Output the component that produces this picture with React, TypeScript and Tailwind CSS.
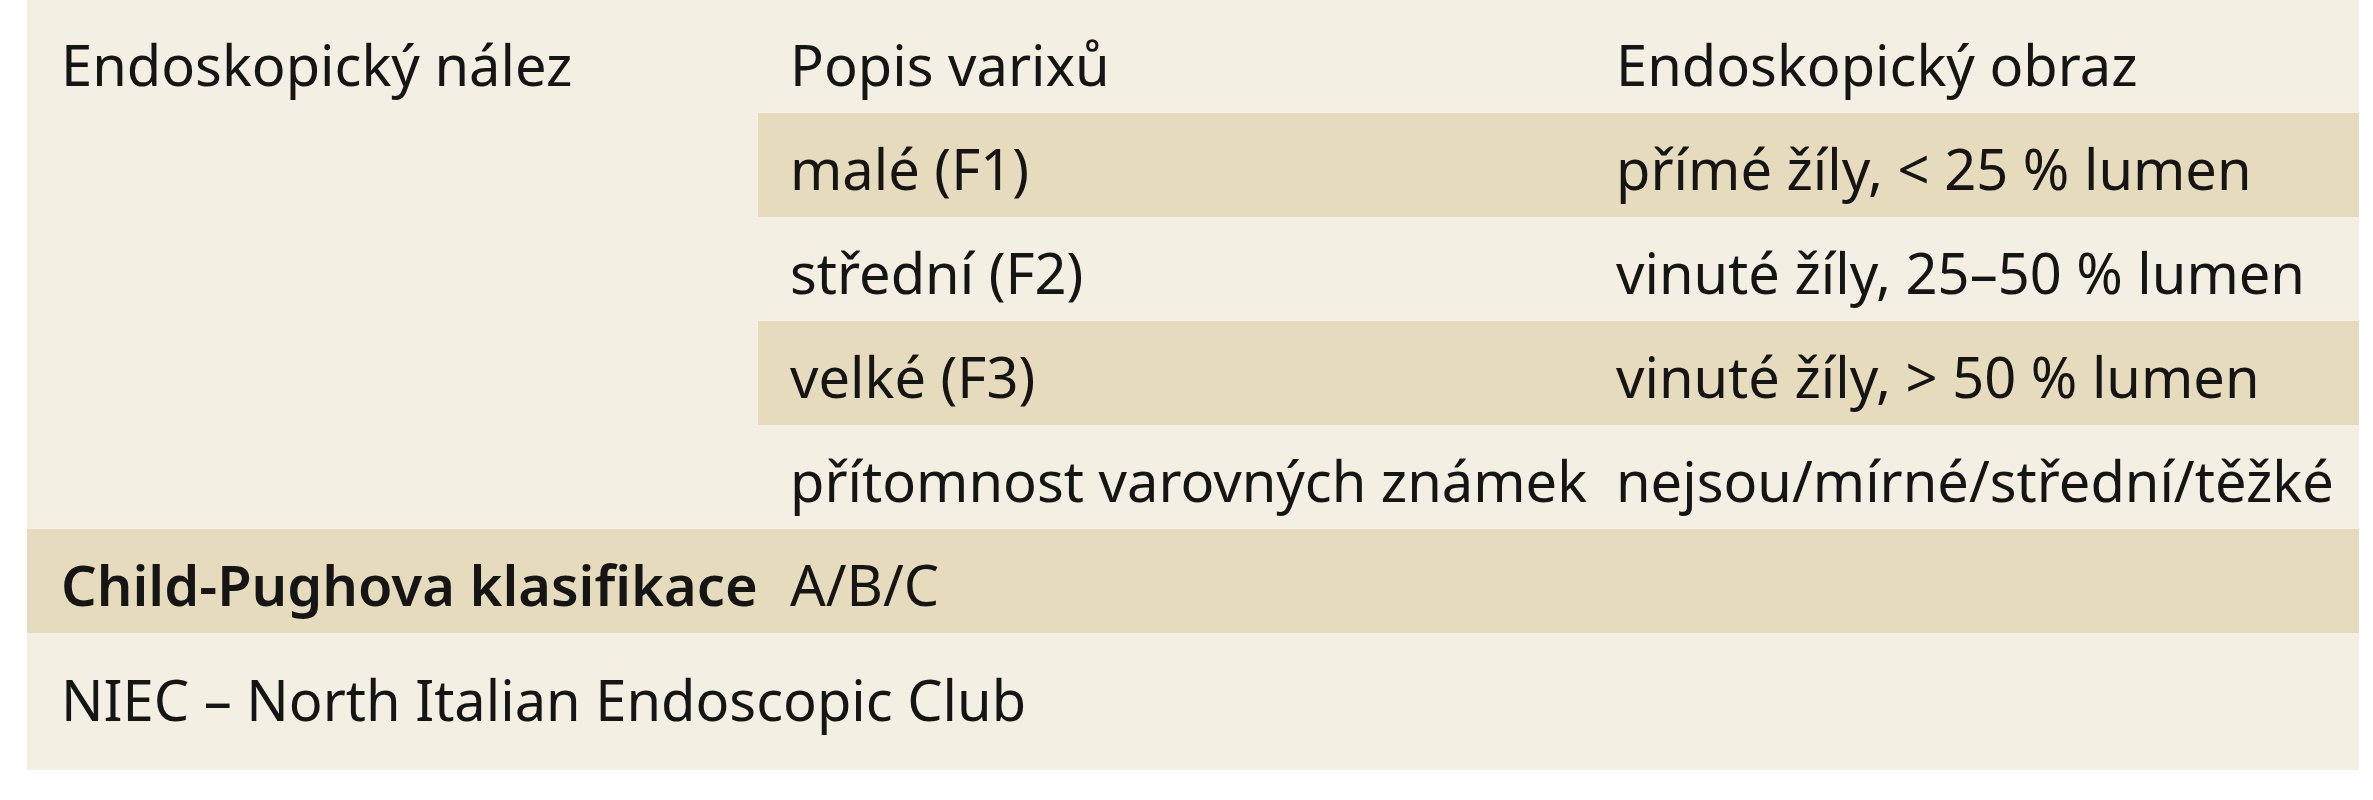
import React from "react";

const font = { fontFamily: '"Noto Sans", "Open Sans", sans-serif' };

type Row = { a?: string; b: string; c?: string; shade: "none" | "right" | "full"; bold?: boolean };

const rows: Row[] = [
  { b: "malé (F1)", c: "přímé žíly, < 25 % lumen", shade: "right" },
  { b: "střední (F2)", c: "vinuté žíly, 25–50 % lumen", shade: "none" },
  { b: "velké (F3)", c: "vinuté žíly, > 50 % lumen", shade: "right" },
  { b: "přítomnost varovných známek", c: "nejsou/mírné/střední/těžké", shade: "none" },
  { a: "Child-Pughova klasifikace", b: "A/B/C", shade: "full", bold: true },
];

export default function App() {
  return (
    <div className="w-[2373px] h-[800px] bg-white">
      <div
        className="ml-[27px] w-[2332px] h-[770px] bg-[#f4efe3] text-[#151515] text-[56px] leading-[56px] flex flex-col"
        style={font}
      >
        <div className="grid grid-cols-[731px_826px_1fr] h-[113px] pt-[36px]">
          <div className="pl-[34px]">Endoskopický nález</div>
          <div className="pl-[32px]">Popis varixů</div>
          <div className="pl-[32px]">Endoskopický obraz</div>
        </div>
        {rows.map((r, i) => (
          <div
            key={i}
            className={
              "grid grid-cols-[731px_826px_1fr] h-[104px] " +
              (r.shade === "full" ? "bg-[#e6dcbd]" : "")
            }
          >
            <div className={"pl-[34px] pt-[27px] whitespace-nowrap " + (r.bold ? "font-semibold" : "")}>
              {r.a ?? ""}
            </div>
            <div
              className={
                "pl-[32px] pt-[27px] whitespace-nowrap " + (r.shade === "right" ? "bg-[#e6dcbd]" : "")
              }
            >
              {r.b}
            </div>
            <div
              className={
                "pl-[32px] pt-[27px] whitespace-nowrap " + (r.shade === "right" ? "bg-[#e6dcbd]" : "")
              }
            >
              {r.c ?? ""}
            </div>
          </div>
        ))}
        <div className="pl-[34px] pt-[38px] whitespace-nowrap">NIEC – North Italian Endoscopic Club</div>
      </div>
    </div>
  );
}
